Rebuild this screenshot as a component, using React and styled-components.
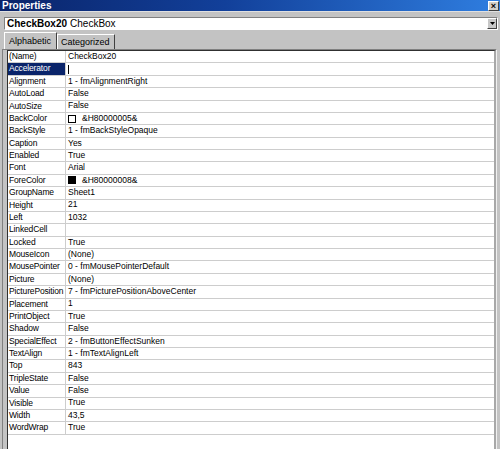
import React from 'react';
import styled, { createGlobalStyle } from 'styled-components';

const Global = createGlobalStyle`
  html, body {
    margin: 0;
    padding: 0;
    overflow: hidden;
    background: #c0c0c0;
  }
`;

const Window = styled.div`
  width: 500px;
  height: 449px;
  display: flex;
  flex-direction: column;
  background: #c3c3c3;
  font-family: "Liberation Sans", Arial, sans-serif;
  font-size: 8.5px;
  color: #000;
  overflow: hidden;
`;

const TitleBar = styled.div`
  height: 11px;
  display: flex;
  align-items: center;
  justify-content: space-between;
  padding: 0 1px 0 2px;
  background: linear-gradient(to right, #0a246a 0%, #12409a 45%, #2f7ee0 100%);
  border-bottom: 1px solid #e0e0e0;
`;

const Title = styled.span`
  color: #fff;
  font-weight: bold;
  font-size: 10px;
  line-height: 11px;
`;

const CloseButton = styled.div`
  width: 9px;
  height: 8px;
  background: #d4d0c8;
  border: 1px solid;
  border-color: #fff #404040 #404040 #fff;
  display: flex;
  align-items: center;
  justify-content: center;
  font-size: 9px;
  font-weight: bold;
  line-height: 8px;
`;

const Combo = styled.div`
  margin: 5px 2px 0 4px;
  height: 13px;
  box-sizing: border-box;
  background: #fff;
  border: 1px solid;
  border-color: #808080 #fff #fff #808080;
  display: flex;
  align-items: center;
  padding-left: 2px;
  font-size: 10px;
`;

const ComboText = styled.span`
  flex: 1;
  line-height: 11px;
  b { font-weight: bold; margin-right: 3px; }
`;

const DropButton = styled.div`
  width: 10px;
  height: 11px;
  box-sizing: border-box;
  background: #c8c8c8;
  border: 1px solid;
  border-color: #fff #404040 #404040 #fff;
  display: flex;
  align-items: center;
  justify-content: center;
`;

const Tabs = styled.div`
  margin: 2px 0 0 4px;
  height: 17px;
  display: flex;
  align-items: flex-end;
`;

const Tab = styled.div`
  box-sizing: border-box;
  height: ${p => (p.active ? 17 : 15)}px;
  padding: ${p => (p.active ? '3px 5px 0 4px' : '2px 4px 0 3px')};
  border: 1px solid;
  border-bottom: none;
  border-color: #fff #404040 transparent #fff;
  background: #c3c3c3;
  font-size: 9px;
  line-height: 11px;
`;

const Grid = styled.div`
  flex: 1;
  margin: 0 3px 0 2px;
  border-left: 1px solid #808080;
  border-top: 1px solid #808080;
  border-right: 1px solid #f0f0f0;
  display: flex;
  background: #c3c3c3;
`;

const Inner = styled.div`
  flex: 1;
  margin-left: 4px;
  border-top: 1px solid #303030;
  border-left: 1px solid #303030;
  border-right: 2px solid #a8a8a8;
  background: #fff;
`;

const Row = styled.div`
  height: 12.39px;
  box-sizing: border-box;
  display: flex;
  border-bottom: 1px solid #cdcdcd;
  line-height: 11.4px;
`;

const NameCell = styled.div`
  width: 58px;
  box-sizing: border-box;
  padding-left: 1px;
  letter-spacing: -0.15px;
  border-right: 1px solid #cdcdcd;
  white-space: nowrap;
  overflow: hidden;
  background: ${p => (p.selected ? '#0a246a' : 'transparent')};
  color: ${p => (p.selected ? '#fff' : '#000')};
`;

const ValueCell = styled.div`
  flex: 1;
  padding-left: 2px;
  display: flex;
  align-items: center;
  white-space: nowrap;
`;

const Swatch = styled.span`
  width: 8px;
  height: 8px;
  box-sizing: border-box;
  border: 1px solid #000;
  background: ${p => p.color};
  margin-right: 6px;
`;

const Caret = styled.span`
  width: 1px;
  height: 9px;
  background: #000;
`;

const props = [
  ['(Name)', 'CheckBox20'],
  ['Accelerator', '', 'caret'],
  ['Alignment', '1 - fmAlignmentRight'],
  ['AutoLoad', 'False'],
  ['AutoSize', 'False'],
  ['BackColor', '&H80000005&', '#fff'],
  ['BackStyle', '1 - fmBackStyleOpaque'],
  ['Caption', 'Yes'],
  ['Enabled', 'True'],
  ['Font', 'Arial'],
  ['ForeColor', '&H80000008&', '#000'],
  ['GroupName', 'Sheet1'],
  ['Height', '21'],
  ['Left', '1032'],
  ['LinkedCell', ''],
  ['Locked', 'True'],
  ['MouseIcon', '(None)'],
  ['MousePointer', '0 - fmMousePointerDefault'],
  ['Picture', '(None)'],
  ['PicturePosition', '7 - fmPicturePositionAboveCenter'],
  ['Placement', '1'],
  ['PrintObject', 'True'],
  ['Shadow', 'False'],
  ['SpecialEffect', '2 - fmButtonEffectSunken'],
  ['TextAlign', '1 - fmTextAlignLeft'],
  ['Top', '843'],
  ['TripleState', 'False'],
  ['Value', 'False'],
  ['Visible', 'True'],
  ['Width', '43,5'],
  ['WordWrap', 'True'],
];

export default function App() {
  return (
    <>
      <Global />
      <Window>
        <TitleBar>
          <Title>Properties</Title>
          <CloseButton>×</CloseButton>
        </TitleBar>
        <Combo>
          <ComboText><b>CheckBox20</b>CheckBox</ComboText>
          <DropButton>
            <svg width="5" height="3" viewBox="0 0 5 3">
              <path d="M0 0H5L2.5 3Z" fill="#000" />
            </svg>
          </DropButton>
        </Combo>
        <Tabs>
          <Tab active>Alphabetic</Tab>
          <Tab>Categorized</Tab>
        </Tabs>
        <Grid>
          <Inner>
            {props.map(([name, value, extra]) => (
              <Row key={name}>
                <NameCell selected={extra === 'caret'}>{name}</NameCell>
                <ValueCell>
                  {extra === 'caret' && <Caret />}
                  {extra && extra !== 'caret' && <Swatch color={extra} />}
                  {value}
                </ValueCell>
              </Row>
            ))}
          </Inner>
        </Grid>
      </Window>
    </>
  );
}
